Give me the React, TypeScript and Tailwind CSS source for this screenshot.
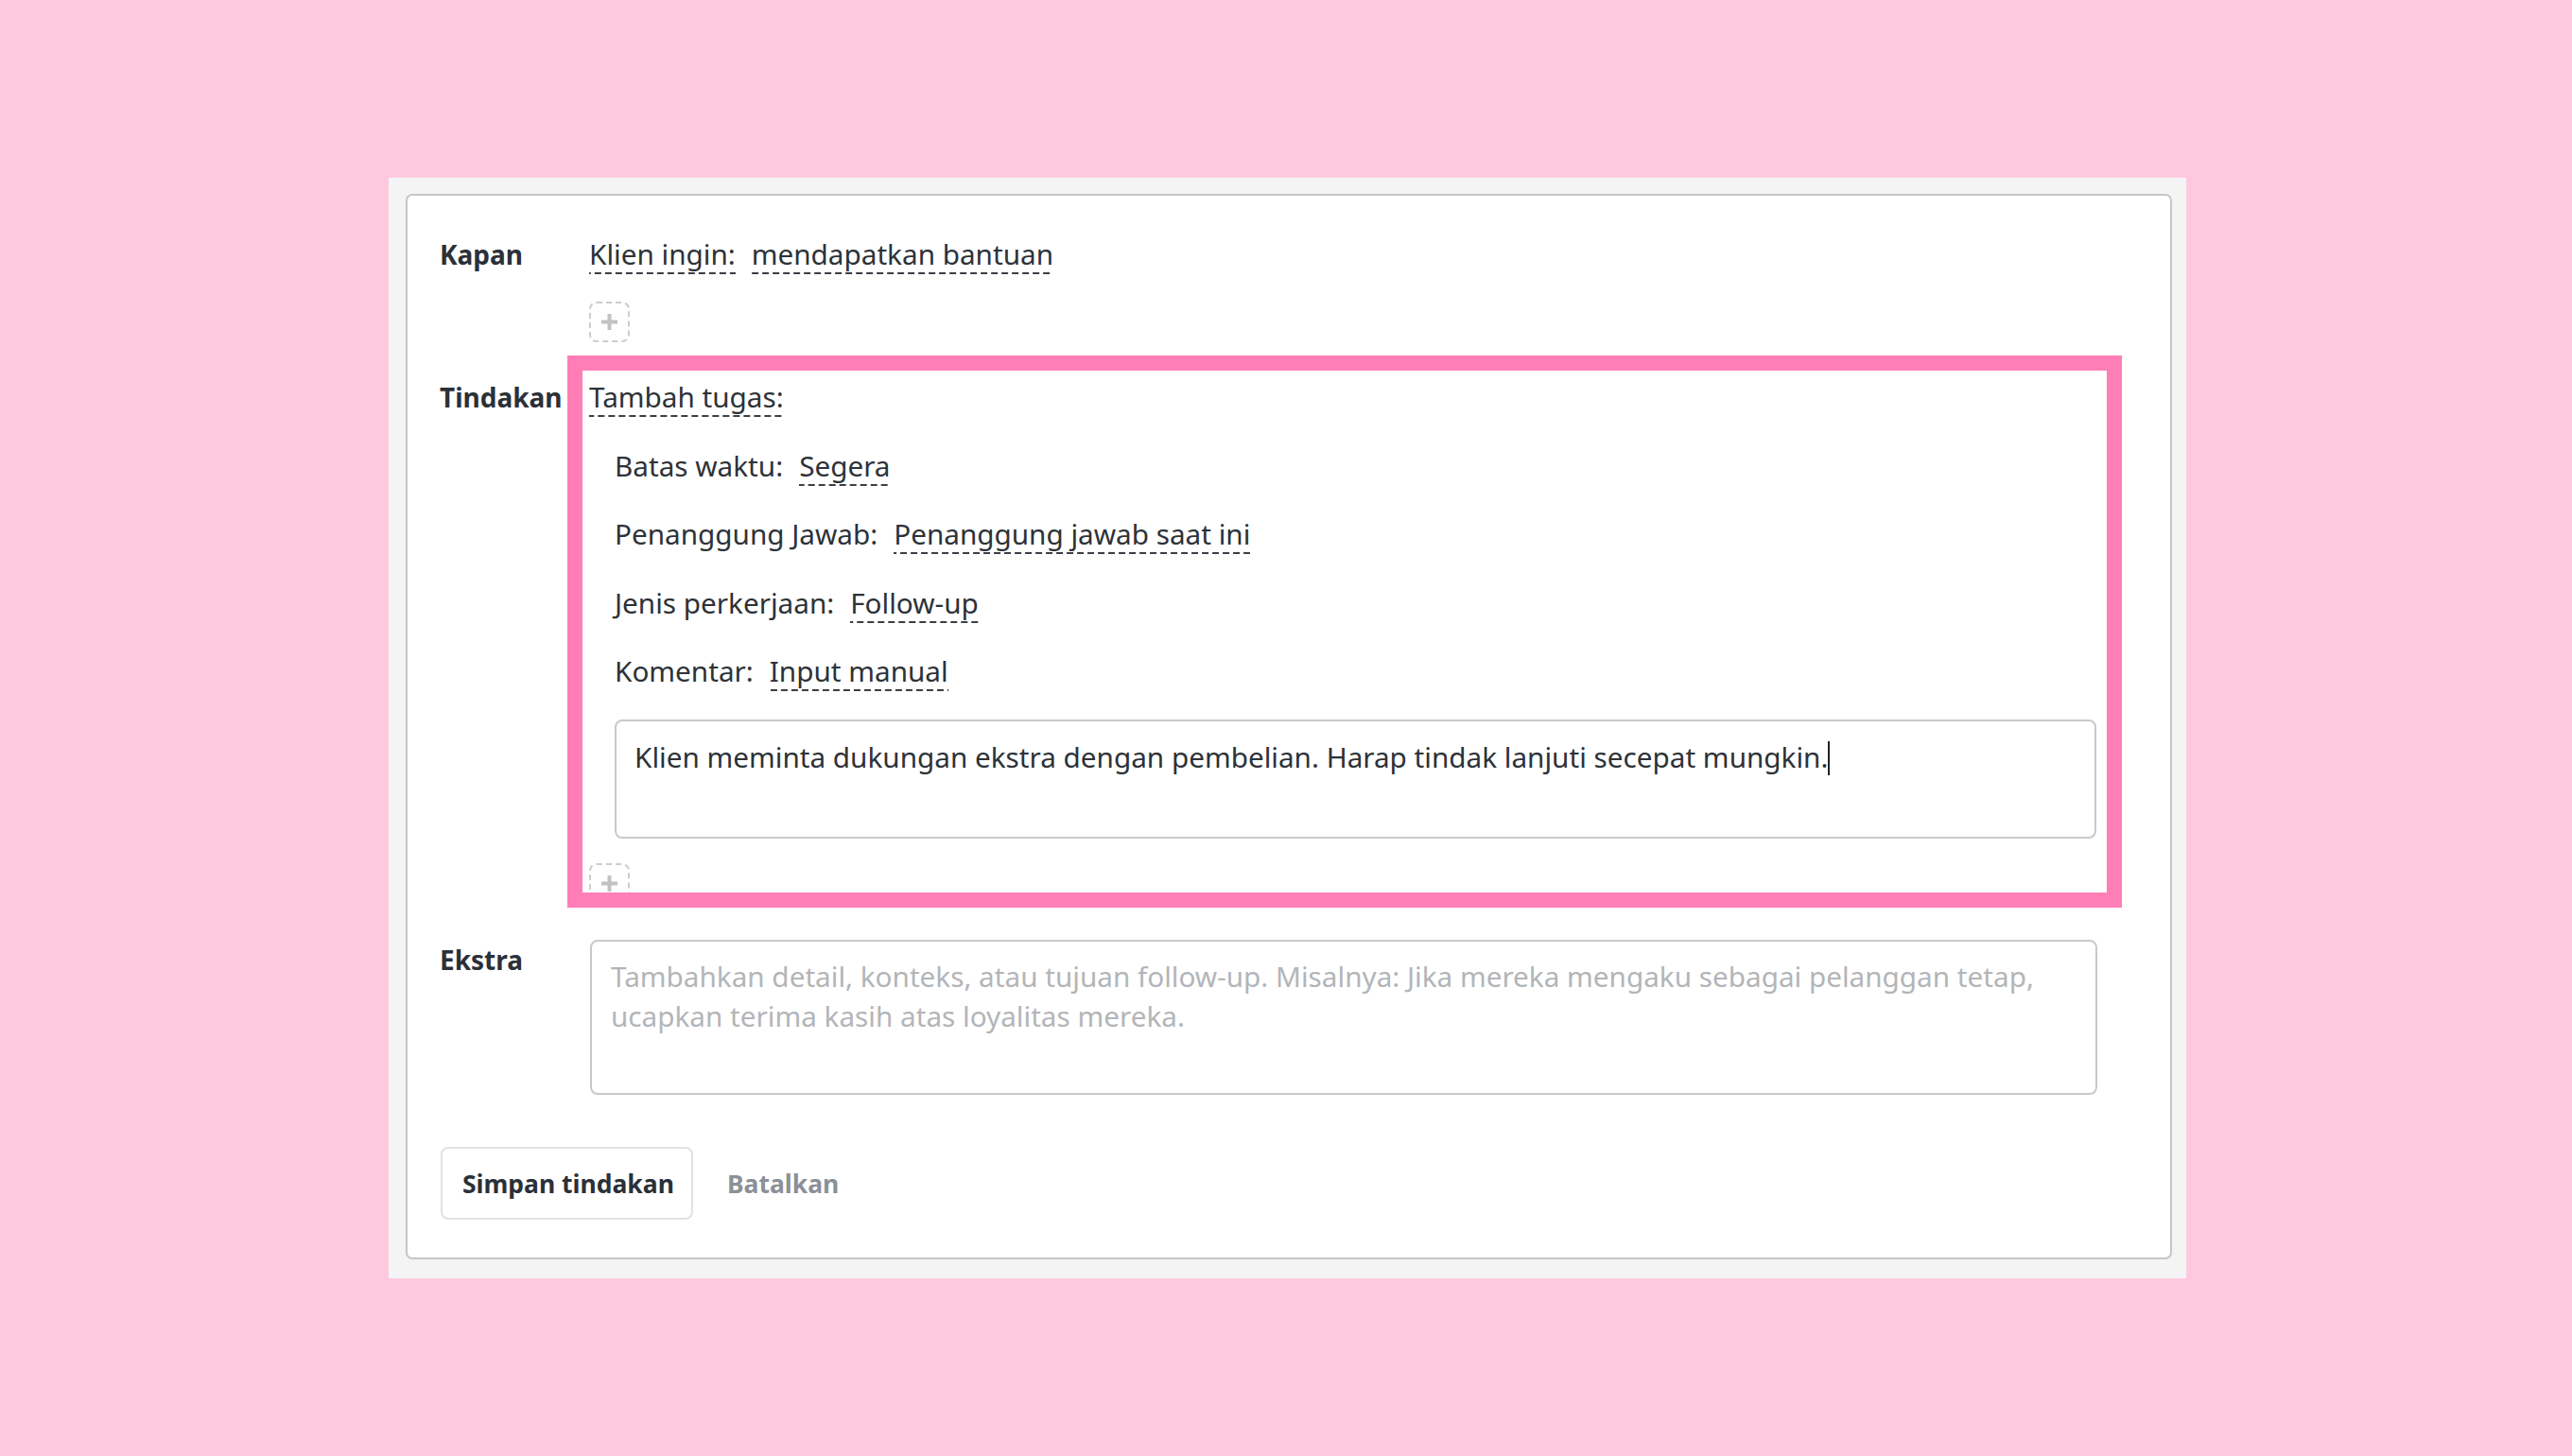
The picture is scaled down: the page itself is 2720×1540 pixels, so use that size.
import React from "react";

function Dashed({ children, className = "" }: { children: React.ReactNode; className?: string }) {
  return (
    <span
      className={
        "pb-[1px] bg-[linear-gradient(to_right,#3a3f46_7px,transparent_7px)] bg-[length:11px_2px] bg-repeat-x bg-bottom " +
        className
      }
    >
      {children}
    </span>
  );
}

function PlusBox({ className = "" }: { className?: string }) {
  return (
    <div
      className={
        "w-[43px] h-[43px] rounded-[8px] border-2 border-dashed border-[#cdcdcd] flex items-center justify-center " +
        className
      }
    >
      <svg width="17" height="17" viewBox="0 0 17 17">
        <rect x="0" y="6.5" width="17" height="4" fill="#c2c2c2" />
        <rect x="6.5" y="0" width="4" height="17" fill="#c2c2c2" />
      </svg>
    </div>
  );
}

function Label({ children }: { children: React.ReactNode }) {
  return (
    <div className="w-[158px] shrink-0 font-bold text-[28px] leading-[42px] text-[#2b3038]">{children}</div>
  );
}

export default function App() {
  return (
    <div className="min-h-screen w-full bg-[#fec9df] pt-[188px] pl-[411px] font-['Noto_Sans',sans-serif]">
      <div className="w-[1901px] bg-[#f4f4f4] pt-[17px] pl-[18px] pr-[15px] pb-[20px]">
        <div className="relative h-[1127px] rounded-[7px] border-2 border-[#c6c6c6] bg-white pl-[34px] pt-[41px] text-[29.7px] leading-[42px] text-[#2d3238]">
          {/* Kapan */}
          <div className="flex">
            <Label>Kapan</Label>
            <div className="w-[1594px]">
              <div className="h-[42px] whitespace-nowrap">
                <Dashed>Klien ingin:</Dashed>
                <Dashed className="ml-[17px]">mendapatkan bantuan</Dashed>
              </div>
              <PlusBox className="mt-[29px]" />
            </div>
          </div>

          {/* Tindakan */}
          <div className="flex mt-[37px]">
            <Label>Tindakan</Label>
            <div className="w-[1594px]">
              <div className="h-[42px] whitespace-nowrap">
                <Dashed>Tambah tugas:</Dashed>
              </div>
              <div className="pl-[27px] flex flex-col gap-[30.5px] mt-[30.5px]">
                <div className="h-[42px] whitespace-nowrap">
                  <span>Batas waktu:</span>
                  <Dashed className="ml-[17px]">Segera</Dashed>
                </div>
                <div className="h-[42px] whitespace-nowrap">
                  <span>Penanggung Jawab:</span>
                  <Dashed className="ml-[17px]">Penanggung jawab saat ini</Dashed>
                </div>
                <div className="h-[42px] whitespace-nowrap">
                  <span>Jenis perkerjaan:</span>
                  <Dashed className="ml-[17px]">Follow-up</Dashed>
                </div>
                <div className="h-[42px] whitespace-nowrap">
                  <span>Komentar:</span>
                  <Dashed className="ml-[17px]">Input manual</Dashed>
                </div>
              </div>
              <div className="ml-[27px] mt-[30px] h-[126px] rounded-[8px] border-2 border-[#c9c9c9] pl-[19px] pt-[17px] whitespace-nowrap text-[#2d3238]">
                Klien meminta dukungan ekstra dengan pembelian. Harap tindak lanjuti secepat mungkin.
                <span className="inline-block w-[2px] h-[36px] bg-[#1f2328] align-[-8px]" />
              </div>
              <PlusBox className="mt-[26px]" />
            </div>
          </div>

          {/* Ekstra */}
          <div className="flex mt-[38px]">
            <Label>Ekstra</Label>
            <div className="w-[1594px] h-[164px] ml-[1px] rounded-[8px] border-2 border-[#c9c9c9] pl-[20px] pt-[16px] text-[#b3b5b8]">
              Tambahkan detail, konteks, atau tujuan follow-up. Misalnya: Jika mereka mengaku sebagai pelanggan tetap,
              <br />
              ucapkan terima kasih atas loyalitas mereka.
            </div>
          </div>

          {/* Buttons */}
          <div className="flex items-center mt-[55px] ml-[1px]">
            <div className="w-[267px] h-[77px] rounded-[8px] border-2 border-[#e1e1e1] flex items-center pl-[21px] font-bold text-[26.5px] text-[#2b3038]">
              Simpan tindakan
            </div>
            <div className="ml-[36px] font-bold text-[26.5px] text-[#8b9097]">Batalkan</div>
          </div>

          {/* Highlight overlay */}
          <div className="pointer-events-none absolute left-[169px] top-[169px] w-[1644px] h-[584px] border-[16px] border-[#ff7eb6]" />
        </div>
      </div>
    </div>
  );
}
